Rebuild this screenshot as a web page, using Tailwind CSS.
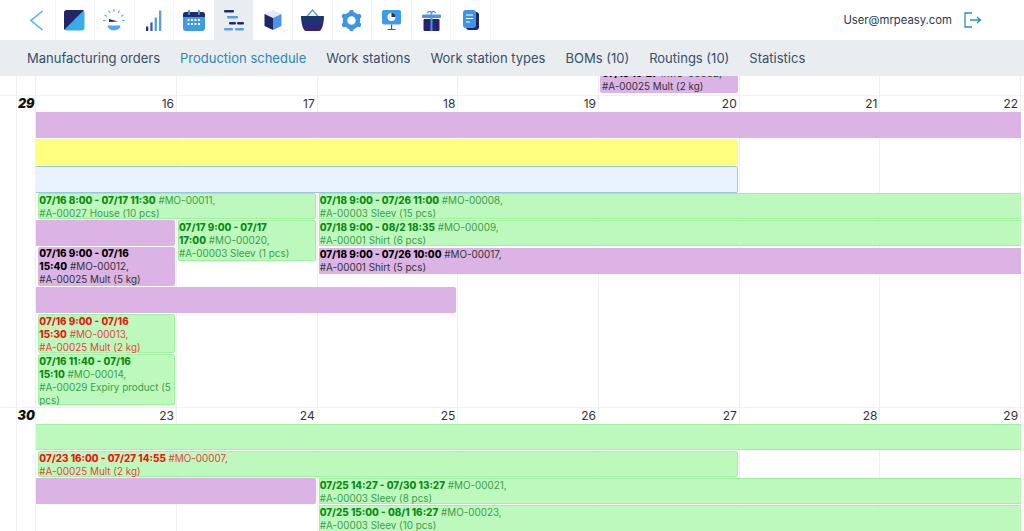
<!DOCTYPE html>
<html lang="en">
<head>
    <meta charset="UTF-8">
    <title>Production schedule</title>
    <script src="https://cdn.jsdelivr.net/npm/@tailwindcss/browser@4"></script>
</head>
<body class="h-[531px] w-[1024px] overflow-hidden bg-white font-['Inter',sans-serif]">
    <!-- top icon bar -->
    <header class="flex h-10 w-full items-stretch">
        <div class="flex w-[55.5px] items-center justify-center border-r border-[#f1f3f5] pl-[18px]">
            <svg width="15" height="21" viewBox="0 0 15 21" fill="none" stroke="#4fb1ee" stroke-width="1.6"><path d="M13.5 1 L2 10.5 L13.5 20" /></svg>
        </div>
        <div class="flex w-[39.6px] items-center justify-center border-r border-[#f1f3f5]">
            <svg width="21" height="21" viewBox="0 0 21 21"><rect width="20.5" height="20.5" rx="3" fill="#36ace9"/><path d="M0 20 V3 a3 3 0 0 1 3-3 H20 Z" fill="#232569"/></svg>
        </div>
        <div class="flex w-[39.6px] items-center justify-center border-r border-[#f1f3f5]">
            <svg width="22" height="22" viewBox="0 0 22 22"><g stroke="#5fb0ec" stroke-width="1.1"><path d="M11 0v3M5.500 1.500l1.500 2.500M16.500 1.500l-1.500 2.500M1.500 6l2.500 1.500M20.500 6l-2.500 1.500M0 11.500h3M22 11.500h-3"/></g><path d="M6 10l9 2.500-9 .5z" fill="#232a6e"/><path d="M4.500 16.500h13a6.500 5 0 0 1-13 0z" fill="#4fa8ea"/></svg>
        </div>
        <div class="flex w-[39.6px] items-center justify-center border-r border-[#f1f3f5]">
            <svg width="16" height="21" viewBox="0 0 16 21"><rect x="0" y="16.500" width="2.300" height="4.500" fill="#2d2f78"/><rect x="4.300" y="12.500" width="2.300" height="8.500" fill="#3a5aa8"/><rect x="8.600" y="7.500" width="2.300" height="13.500" fill="#5b9de6"/><rect x="13" y="0.500" width="2.300" height="20.500" fill="#5b9de6"/></svg>
        </div>
        <div class="flex w-[39.6px] items-center justify-center">
            <svg width="22" height="21" viewBox="0 0 22 21"><rect y="2" width="22" height="19" rx="3" fill="#3d9be8"/><path d="M0 7V5a3 3 0 0 1 3-3h16a3 3 0 0 1 3 3v2z" fill="#232a6e"/><rect x="5" y="0" width="2" height="5" rx="1" fill="#3d9be8"/><rect x="15" y="0" width="2" height="5" rx="1" fill="#3d9be8"/><g fill="#fff"><rect x="4.500" y="9" width="2" height="2"/><rect x="8" y="9" width="2" height="2"/><rect x="11.500" y="9" width="2" height="2"/><rect x="15" y="9" width="2" height="2"/><rect x="4.500" y="13" width="2" height="2"/><rect x="8" y="13" width="2" height="2"/><rect x="11.500" y="13" width="2" height="2"/><rect x="15" y="13" width="2" height="2"/></g></svg>
        </div>
        <div class="flex w-[39.6px] items-center justify-center bg-[#e9edf0]">
            <svg width="20" height="21" viewBox="0 0 20 21"><rect x="0" y="0" width="10" height="2.500" rx="1" fill="#232a6e"/><rect x="3" y="6" width="11" height="2.500" rx="1" fill="#5b9de6"/><rect x="5" y="12" width="7" height="2.500" rx="1" fill="#232a6e"/><rect x="13" y="12" width="7" height="2.500" rx="1" fill="#232a6e"/><rect x="0" y="18" width="9" height="2.500" rx="1" fill="#5b9de6"/><rect x="11" y="18" width="9" height="2.500" rx="1" fill="#5b9de6"/></svg>
        </div>
        <div class="flex w-[39.6px] items-center justify-center border-r border-[#f1f3f5]">
            <svg width="18" height="20" viewBox="0 0 18 20"><path d="M9 0l8.500 4L9 8 .5 4z" fill="#e4eaf2"/><path d="M.5 4L9 8v12L.5 16z" fill="#1f2668"/><path d="M17.500 4L9 8v12l8.500-4z" fill="#4a93ea"/></svg>
        </div>
        <div class="flex w-[39.6px] items-center justify-center border-r border-[#f1f3f5]">
            <svg width="23" height="22" viewBox="0 0 23 22"><defs><linearGradient id="bk" x1="0" y1="0" x2="0" y2="1"><stop offset="0" stop-color="#173a6e"/><stop offset="1" stop-color="#38207c"/></linearGradient></defs><path d="M5.500 8L11.500 1 17.500 8" fill="none" stroke="#4fa8ea" stroke-width="1.500"/><path d="M0 7h23c0 7-2 15-5 15H5C2 22 0 14 0 7z" fill="url(#bk)"/></svg>
        </div>
        <div class="flex w-[39.6px] items-center justify-center border-r border-[#f1f3f5]">
            <svg width="21" height="21" viewBox="0 0 21 21"><circle cx="10.500" cy="10.500" r="6.500" fill="none" stroke="#3d95e6" stroke-width="4.500"/><g stroke="#3d95e6" stroke-width="4.500" stroke-linecap="round"><path d="M10.500 2v1M10.500 18v1M3.100 6.200l.9.500M17 14.300l.9.500M3.100 14.800l.9-.5M17 6.700l.9-.5"/></g></svg>
        </div>
        <div class="flex w-[39.6px] items-center justify-center border-r border-[#f1f3f5]">
            <svg width="19" height="20" viewBox="0 0 19 20"><rect width="19" height="14.500" rx="2" fill="#3d9be8"/><circle cx="9.500" cy="7" r="4" fill="#fff"/><path d="M9.500 7V3a4 4 0 0 1 4 4z" fill="#232a6e"/><path d="M9 14.500h1.200V19H9zM5.500 19h8v1h-8z" fill="#2c5fa8"/></svg>
        </div>
        <div class="flex w-[39.6px] items-center justify-center border-r border-[#f1f3f5]">
            <svg width="19" height="21" viewBox="0 0 19 21"><path d="M5.500 3a2 2 0 0 1 4 1 2 2 0 0 1 4-1" fill="none" stroke="#4a93ea" stroke-width="1.400"/><rect x="0" y="4.500" width="19" height="3.500" rx="1" fill="#4a93ea"/><rect x="1.500" y="9" width="16" height="12" rx="1" fill="#25236e"/><rect x="8.500" y="4.500" width="2" height="16.500" fill="#4a93ea"/></svg>
        </div>
        <div class="flex w-[39.6px] items-center justify-center border-r border-[#f1f3f5]">
            <svg width="16" height="20" viewBox="0 0 16 20"><rect x="3" y="2" width="13" height="18" rx="3" fill="#1f2668"/><rect x="0" y="0" width="13" height="18" rx="3" fill="#3d95e6"/><path d="M3 5h7M3 8.500h7M3 12h4" stroke="#fff" stroke-width="1.200"/></svg>
        </div>
        <div class="ml-auto flex items-center gap-3 pr-[42px]">
            <span class="text-[11.3px] text-[#2a3a4a]">User@mrpeasy.com</span>
            <svg width="18" height="16" viewBox="0 0 18 16" fill="none" stroke="#2a8fc9" stroke-width="1.300"><path d="M8 1H1v14h7M6 8h11M13 5l3.500 3-3.500 3"/></svg>
        </div>
    </header>

    <!-- tabs -->
    <nav class="flex h-9 items-center gap-5 bg-[#e9edf0] pl-[27px] pt-[1px] text-[13px] text-[#34506a]">
        <a>Manufacturing orders</a>
        <a class="text-[#2b86bd]">Production schedule</a>
        <a>Work stations</a>
        <a>Work station types</a>
        <a>BOMs (10)</a>
        <a>Routings (10)</a>
        <a>Statistics</a>
    </nav>

    <!-- calendar, remainder of week 28 -->
    <div class="grid h-[19px] grid-cols-[16px_20.3px_repeat(7,140.7px)] grid-rows-[19px] overflow-hidden text-[9.9px] leading-[13px] text-[#333]">
        <div class="col-start-2 row-start-1 border-x border-[#f0f0f0]"></div>
        <div class="col-start-3 row-start-1 border-r border-[#f0f0f0]"></div>
        <div class="col-start-4 row-start-1 border-r border-[#f0f0f0]"></div>
        <div class="col-start-5 row-start-1 border-r border-[#f0f0f0]"></div>
        <div class="col-start-6 row-start-1 border-r border-[#f0f0f0]"></div>
        <div class="col-start-7 row-start-1 border-r border-[#f0f0f0]"></div>
        <div class="col-start-8 row-start-1 border-r border-[#f0f0f0]"></div>
        <div class="col-start-9 row-start-1 border-r border-[#f0f0f0]"></div>
        <div class="col-start-7 row-start-1 flex flex-col justify-end pb-[2px] pl-[1px] pr-[2px]">
            <div class="rounded-[2px] bg-[#dbb3e4] px-[2px]"><b class="font-extrabold text-black">07/19 16:27</b>&nbsp;#MO-00002,<br>#A-00025 Mult (2 kg)</div>
        </div>
    </div>

    <!-- week 29 -->
    <div class="grid grid-cols-[16px_20.3px_repeat(7,140.7px)] grid-rows-[16px_27px_27px_27px_27px_27px_40px_27px_40px_53px] border-t border-[#f0f0f0] text-[9.9px] leading-[13px] text-[#333]">
        <div class="col-start-2 row-span-full row-start-1 border-x border-[#f0f0f0] text-center text-[12.5px] leading-[16px] font-black italic text-[#111]">29</div>
        <div class="col-start-3 row-span-full row-start-1 border-r border-[#f0f0f0] pr-[2px] text-right text-[12px] leading-[16px]">16</div>
        <div class="col-start-4 row-span-full row-start-1 border-r border-[#f0f0f0] pr-[2px] text-right text-[12px] leading-[16px]">17</div>
        <div class="col-start-5 row-span-full row-start-1 border-r border-[#f0f0f0] pr-[2px] text-right text-[12px] leading-[16px]">18</div>
        <div class="col-start-6 row-span-full row-start-1 border-r border-[#f0f0f0] pr-[2px] text-right text-[12px] leading-[16px]">19</div>
        <div class="col-start-7 row-span-full row-start-1 border-r border-[#f0f0f0] pr-[2px] text-right text-[12px] leading-[16px]">20</div>
        <div class="col-start-8 row-span-full row-start-1 border-r border-[#f0f0f0] pr-[2px] text-right text-[12px] leading-[16px]">21</div>
        <div class="col-start-9 row-span-full row-start-1 border-r border-[#f0f0f0] pr-[2px] text-right text-[12px] leading-[16px]">22</div>

        <div class="col-start-3 col-span-7 row-start-2 mb-[1px] bg-[#dbb3e4]"></div>
        <div class="col-start-3 col-span-5 row-start-3 mb-[1px] mr-[2px] rounded-r-[2px] bg-[#ffff7f]"></div>
        <div class="col-start-3 col-span-5 row-start-4 mr-[2px] rounded-r-[2px] border border-l-0 border-[#9cc4ea] bg-[#e8f3ff]"></div>

        <div class="col-start-3 col-span-2 row-start-5 mb-[1px] ml-[2px] mr-[2px] rounded-[2px] border border-[#9df29d] bg-[#bdf9bd] text-[#3c9e4a]"><b class="font-extrabold text-[#0a8a14]">07/16 8:00 - 07/17 11:30</b>&nbsp;#MO-00011,<br>#A-00027 House (10 pcs)</div>
        <div class="col-start-5 col-span-5 row-start-5 mb-[1px] ml-[1px] border border-r-0 border-[#9df29d] bg-[#bdf9bd] text-[#3c9e4a]"><b class="font-extrabold text-[#0a8a14]">07/18 9:00 - 07/26 11:00</b>&nbsp;#MO-00008,<br>#A-00003 Sleev (15 pcs)</div>

        <div class="col-start-3 row-start-6 mb-[1px] mr-[2px] rounded-r-[2px] bg-[#dbb3e4]"></div>
        <div class="col-start-4 row-start-6 row-span-2 ml-[1px] mr-[2px] self-start rounded-[2px] border border-[#9df29d] bg-[#bdf9bd] text-[#3c9e4a]"><b class="font-extrabold text-[#0a8a14]">07/17 9:00 - 07/17 17:00</b>&nbsp;#MO-00020,<br>#A-00003 Sleev (1 pcs)</div>
        <div class="col-start-5 col-span-5 row-start-6 mb-[1px] ml-[1px] border border-r-0 border-[#9df29d] bg-[#bdf9bd] text-[#3c9e4a]"><b class="font-extrabold text-[#0a8a14]">07/18 9:00 - 08/2 18:35</b>&nbsp;#MO-00009,<br>#A-00001 Shirt (6 pcs)</div>

        <div class="col-start-3 row-start-7 mb-[1px] ml-[2px] mr-[2px] rounded-[2px] bg-[#dbb3e4] px-[1px]"><b class="font-extrabold text-black">07/16 9:00 - 07/16 15:40</b>&nbsp;#MO-00012,<br>#A-00025 Mult (5 kg)</div>
        <div class="col-start-5 col-span-5 row-start-7 ml-[1px] mt-[1px] h-[26px] self-start bg-[#dbb3e4] px-[1px]"><b class="font-extrabold text-black">07/18 9:00 - 07/26 10:00</b>&nbsp;#MO-00017,<br>#A-00001 Shirt (5 pcs)</div>

        <div class="col-start-3 col-span-3 row-start-8 mb-[1px] mr-[2px] rounded-r-[2px] bg-[#dbb3e4]"></div>

        <div class="col-start-3 row-start-9 mb-[1px] ml-[2px] mr-[2px] rounded-[2px] border border-[#9df29d] bg-[#bdf9bd] text-[#ee4040]"><b class="font-extrabold text-[#fa0f0f]">07/16 9:00 - 07/16 15:30</b>&nbsp;#MO-00013,<br>#A-00025 Mult (2 kg)</div>
        <div class="col-start-3 row-start-10 mb-[2px] ml-[2px] mr-[2px] rounded-[2px] border border-[#9df29d] bg-[#bdf9bd] text-[#3c9e4a]"><b class="font-extrabold text-[#0a8a14]">07/16 11:40 - 07/16 15:10</b>&nbsp;#MO-00014,<br>#A-00029 Expiry product (5 pcs)</div>
    </div>

    <!-- week 30 -->
    <div class="grid grid-cols-[16px_20.3px_repeat(7,140.7px)] grid-rows-[16px_27px_27px_27px_27px] border-t border-[#f0f0f0] text-[9.9px] leading-[13px] text-[#333]">
        <div class="col-start-2 row-span-full row-start-1 border-x border-[#f0f0f0] text-center text-[12.5px] leading-[16px] font-black italic text-[#111]">30</div>
        <div class="col-start-3 row-span-full row-start-1 border-r border-[#f0f0f0] pr-[2px] text-right text-[12px] leading-[16px]">23</div>
        <div class="col-start-4 row-span-full row-start-1 border-r border-[#f0f0f0] pr-[2px] text-right text-[12px] leading-[16px]">24</div>
        <div class="col-start-5 row-span-full row-start-1 border-r border-[#f0f0f0] pr-[2px] text-right text-[12px] leading-[16px]">25</div>
        <div class="col-start-6 row-span-full row-start-1 border-r border-[#f0f0f0] pr-[2px] text-right text-[12px] leading-[16px]">26</div>
        <div class="col-start-7 row-span-full row-start-1 border-r border-[#f0f0f0] pr-[2px] text-right text-[12px] leading-[16px]">27</div>
        <div class="col-start-8 row-span-full row-start-1 border-r border-[#f0f0f0] pr-[2px] text-right text-[12px] leading-[16px]">28</div>
        <div class="col-start-9 row-span-full row-start-1 border-r border-[#f0f0f0] pr-[2px] text-right text-[12px] leading-[16px]">29</div>

        <div class="col-start-3 col-span-7 row-start-2 mb-[1px] border-y border-[#9df29d] bg-[#bdf9bd]"></div>
        <div class="col-start-3 col-span-5 row-start-3 mb-[1px] ml-[2px] mr-[2px] rounded-[2px] border border-[#9df29d] bg-[#bdf9bd] text-[#ee4040]"><b class="font-extrabold text-[#fa0f0f]">07/23 16:00 - 07/27 14:55</b>&nbsp;#MO-00007,<br>#A-00025 Mult (2 kg)</div>
        <div class="col-start-3 col-span-2 row-start-4 mb-[1px] mr-[2px] rounded-r-[2px] bg-[#dbb3e4]"></div>
        <div class="col-start-5 col-span-5 row-start-4 mb-[1px] ml-[1px] border border-r-0 border-[#9df29d] bg-[#bdf9bd] text-[#3c9e4a]"><b class="font-extrabold text-[#0a8a14]">07/25 14:27 - 07/30 13:27</b>&nbsp;#MO-00021,<br>#A-00003 Sleev (8 pcs)</div>
        <div class="col-start-5 col-span-5 row-start-5 ml-[1px] border border-r-0 border-[#9df29d] bg-[#bdf9bd] text-[#3c9e4a]"><b class="font-extrabold text-[#0a8a14]">07/25 15:00 - 08/1 16:27</b>&nbsp;#MO-00023,<br>#A-00003 Sleev (10 pcs)</div>
    </div>
</body>
</html>
